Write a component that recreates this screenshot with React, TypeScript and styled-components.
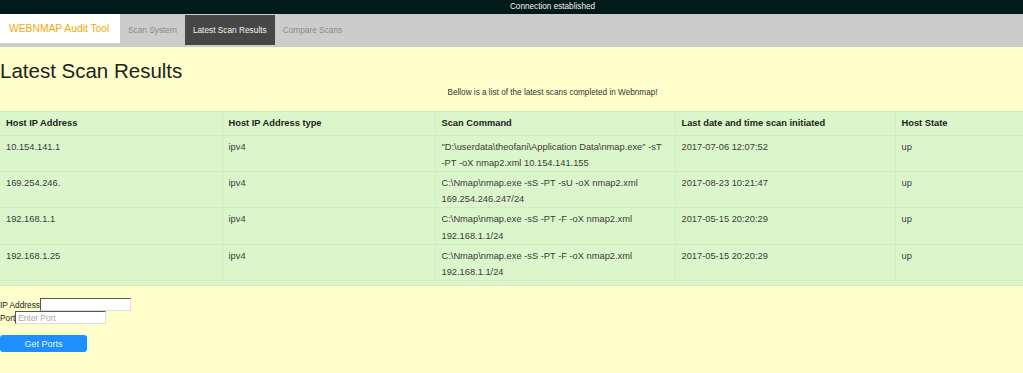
import React from 'react';
import styled, { createGlobalStyle } from 'styled-components';

const GlobalStyle = createGlobalStyle`
    html, body {
        margin: 0;
        padding: 0;
        background: #ffffcc;
        font-family: "Liberation Sans", Arial, sans-serif;
        color: #333;
    }
`;

const TopBar = styled.div`
    height: 14px;
    line-height: 14px;
    background: #031a1a;
    color: #f2f2f2;
    font-size: 8.2px;
    text-align: center;
    padding-left: 82px;
`;

const Nav = styled.nav`
    display: flex;
    align-items: flex-start;
    height: 33px;
    background: #cccccc;
`;

const Brand = styled.div`
    width: 120px;
    height: 29px;
    line-height: 29px;
    box-sizing: border-box;
    padding-left: 9px;
    background: #ffffff;
    color: #f2a900;
    font-size: 10.3px;
`;

const Tab = styled.div<{ active?: boolean }>`
    margin-top: 1px;
    height: 30px;
    line-height: 30px;
    padding: 0 8px;
    font-size: 8.3px;
    color: ${(props) => (props.active ? '#f0f0f0' : '#8a8a8a')};
    background: ${(props) => (props.active ? '#474747' : 'transparent')};
`;

const Title = styled.h1`
    margin: 13px 0 0;
    font-size: 20.5px;
    line-height: 22px;
    font-weight: normal;
    color: #222;
`;

const Subtitle = styled.p`
    margin: 6px 0 0;
    padding-left: 82px;
    text-align: center;
    font-size: 8.2px;
    line-height: 10px;
    color: #333;
`;

const TableWrap = styled.div`
    margin-top: 13px;
    background: #dcf6cb;
    border-top: 1px solid #d2ecc2;
    border-bottom: 1px solid #d2ecc2;
    padding-bottom: 4px;
`;

const Table = styled.table`
    width: 100%;
    table-layout: fixed;
    border-collapse: collapse;
    font-size: 9.3px;
`;

const Th = styled.th`
    text-align: left;
    font-weight: bold;
    color: #222;
    padding: 3px 6px 3px;
    line-height: 16.5px;
    border-left: 1px solid #d2ecc2;
    &:first-child {
        border-left: none;
    }
`;

const Td = styled.td`
    vertical-align: top;
    padding: 3px 6px 0;
    line-height: 16.2px;
    height: 32.4px;
    color: #3a3a3a;
    border-top: 1px solid #d2ecc2;
    border-left: 1px solid #d2ecc2;
    border-bottom: 1px solid #d2ecc2;
    &:first-child {
        border-left: none;
    }
`;

const Token = styled.span`
    white-space: nowrap;
`;

const Form = styled.div`
    margin-top: 12px;
    font-size: 8.3px;
    color: #222;
`;

const Field = styled.label`
    display: flex;
    align-items: center;
    height: 13px;
`;

const Input = styled.input`
    box-sizing: border-box;
    width: 91px;
    height: 13px;
    margin: 0;
    padding: 0 2px;
    font-family: "Liberation Sans", Arial, sans-serif;
    font-size: 8.3px;
    background: #fff;
    border: 1px solid;
    border-color: #555 #ddd #ddd #555;
    outline: none;
    &::placeholder {
        color: #a8a8a8;
    }
`;

const Button = styled.button`
    display: block;
    margin-top: 11px;
    width: 87px;
    height: 17px;
    padding: 0;
    border: none;
    border-radius: 3px;
    background: #1e8fff;
    color: #eaf4ff;
    font-family: "Liberation Sans", Arial, sans-serif;
    font-size: 9px;
`;

const rows = [
    {
        ip: '10.154.141.1',
        type: 'ipv4',
        cmd: '"D:\\userdata\\theofani\\Application Data\\nmap.exe" -sT -PT -oX nmap2.xml 10.154.141.155',
        date: '2017-07-06 12:07:52',
        state: 'up',
    },
    {
        ip: '169.254.246.',
        type: 'ipv4',
        cmd: 'C:\\Nmap\\nmap.exe -sS -PT -sU -oX nmap2.xml 169.254.246.247/24',
        date: '2017-08-23 10:21:47',
        state: 'up',
    },
    {
        ip: '192.168.1.1',
        type: 'ipv4',
        cmd: 'C:\\Nmap\\nmap.exe -sS -PT -F -oX nmap2.xml 192.168.1.1/24',
        date: '2017-05-15 20:20:29',
        state: 'up',
    },
    {
        ip: '192.168.1.25',
        type: 'ipv4',
        cmd: 'C:\\Nmap\\nmap.exe -sS -PT -F -oX nmap2.xml 192.168.1.1/24',
        date: '2017-05-15 20:20:29',
        state: 'up',
    },
];

// keep the flags like "-PT" from breaking after the dash
const Command = ({ text }: { text: string }) => (
    <>
        {text.split(' ').map((part, i) => (
            <React.Fragment key={i}>
                {i > 0 && ' '}
                <Token>{part}</Token>
            </React.Fragment>
        ))}
    </>
);

export default function App() {
    return (
        <>
            <GlobalStyle />
            <TopBar>Connection established</TopBar>
            <Nav>
                <Brand>WEBNMAP Audit Tool</Brand>
                <Tab>Scan System</Tab>
                <Tab active>Latest Scan Results</Tab>
                <Tab>Compare Scans</Tab>
            </Nav>
            <Title>Latest Scan Results</Title>
            <Subtitle>Bellow is a list of the latest scans completed in Webnmap!</Subtitle>
            <TableWrap>
                <Table>
                    <colgroup>
                        <col style={{ width: 222 }} />
                        <col style={{ width: 213 }} />
                        <col style={{ width: 240 }} />
                        <col style={{ width: 220 }} />
                        <col />
                    </colgroup>
                    <thead>
                        <tr>
                            <Th>Host IP Address</Th>
                            <Th>Host IP Address type</Th>
                            <Th>Scan Command</Th>
                            <Th>Last date and time scan initiated</Th>
                            <Th>Host State</Th>
                        </tr>
                    </thead>
                    <tbody>
                        {rows.map((r, i) => (
                            <tr key={i}>
                                <Td>{r.ip}</Td>
                                <Td>{r.type}</Td>
                                <Td>
                                    <Command text={r.cmd} />
                                </Td>
                                <Td>{r.date}</Td>
                                <Td>{r.state}</Td>
                            </tr>
                        ))}
                    </tbody>
                </Table>
            </TableWrap>
            <Form>
                <Field>
                    IP Address
                    <Input type="text" />
                </Field>
                <Field>
                    Port
                    <Input type="text" placeholder="Enter Port" />
                </Field>
                <Button>Get Ports</Button>
            </Form>
        </>
    );
}
